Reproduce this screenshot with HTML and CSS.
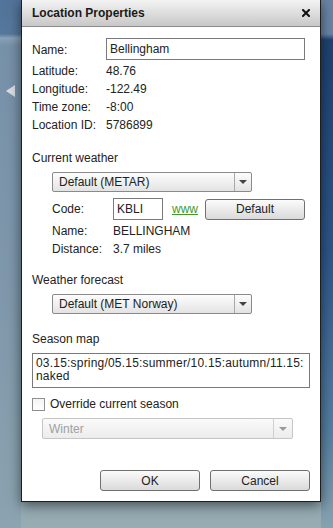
FILE: index.html
```html
<!DOCTYPE html>
<html lang="en">
<head>
    <meta charset="UTF-8">
    <title>Location Properties</title>
    <link rel="stylesheet" href="styles.css">
</head>
<body>
    <div class="desk">
        <div class="side-left"><span class="nav-arrow"></span></div>

        <div class="dialog">
            <div class="titlebar">
                <span class="title">Location Properties</span>
                <svg class="close" width="8" height="8" viewBox="0 0 8 8">
                    <path d="M1 1 L7 7 M7 1 L1 7" stroke="#111" stroke-width="2" stroke-linecap="square"/>
                </svg>
            </div>

            <div class="content">
                <div class="props">
                    <span>Name:</span><input class="field" type="text" value="Bellingham">
                    <span>Latitude:</span><span>48.76</span>
                    <span>Longitude:</span><span>-122.49</span>
                    <span>Time zone:</span><span>-8:00</span>
                    <span>Location ID:</span><span>5786899</span>
                </div>

                <div class="section-title">Current weather</div>
                <div class="indent">
                    <div class="select">
                        <span class="select-text">Default (METAR)</span>
                        <span class="select-btn"><i class="caret"></i></span>
                    </div>
                    <div class="code-row">
                        <span class="code-label">Code:</span>
                        <input class="field code-input" type="text" value="KBLI">
                        <a class="www" href="#">www</a>
                        <button class="btn">Default</button>
                    </div>
                    <div class="station">
                        <span>Name:</span><span>BELLINGHAM</span>
                        <span>Distance:</span><span>3.7 miles</span>
                    </div>
                </div>

                <div class="section-title forecast">Weather forecast</div>
                <div class="indent">
                    <div class="select">
                        <span class="select-text">Default (MET Norway)</span>
                        <span class="select-btn"><i class="caret"></i></span>
                    </div>
                </div>

                <div class="section-title season">Season map</div>
                <div class="textarea">03.15:spring/05.15:summer/10.15:autumn/11.15:<br>naked</div>

                <div class="check-row">
                    <span class="checkbox"></span>
                    <span>Override current season</span>
                </div>
                <div class="select select-wide disabled">
                    <span class="select-text">Winter</span>
                    <span class="select-btn"><i class="caret"></i></span>
                </div>
            </div>

            <div class="actions">
                <button class="btn">OK</button>
                <button class="btn">Cancel</button>
            </div>
        </div>

        <div class="side-right"></div>
    </div>
</body>
</html>
```

FILE: styles.css
```css
body {
    margin: 0;
    width: 333px;
    height: 528px;
    overflow: hidden;
    font-family: "Liberation Sans", Arial, sans-serif;
    font-size: 12px;
    color: #222;
    background: linear-gradient(#7f98ab, #8ea5b0 90%, #98acb3);
}

.desk {
    display: flex;
    height: 528px;
}

/* fondo */
.side-left {
    width: 21px;
    padding: 85px 0 0 6px;
    box-sizing: border-box;
    background: linear-gradient(#52739a 0, #57789c 34px, #8aa1b8 38px, #7791a9 46px, #7f98ab 300px, #8ca4b0 528px);
}

.nav-arrow {
    display: block;
    width: 0;
    height: 0;
    border-top: 6px solid transparent;
    border-bottom: 6px solid transparent;
    border-right: 9px solid #d9dee4;
}

.side-right {
    flex: 1;
    background: linear-gradient(#6985a6 0, #6985a6 34px, #1f4272 40px, #2c568a 250px, #547fa3 430px, #86a2b0 528px);
}

/* ventana */
.dialog {
    width: 300px;
    height: 502px;
    box-sizing: border-box;
    border: 1px solid #1e1e1e;
    border-top: none;
    background: #fff;
    box-shadow: 0 3px 12px rgba(0, 0, 0, 0.55);
    display: flex;
    flex-direction: column;
    position: relative;
    z-index: 1;
}

.titlebar {
    height: 26px;
    border-bottom: 1px solid #8c8c8c;
    background: linear-gradient(#f3f3f3, #c8c8c8);
    display: flex;
    align-items: center;
    justify-content: space-between;
    padding: 0 10px 0 10px;
}

.title {
    font-weight: bold;
    font-size: 12px;
    color: #1a1a1a;
}

.close {
    display: block;
}

.content {
    padding: 11px 15px 0 10px;
}

.props {
    display: grid;
    grid-template-columns: 74px 1fr;
    align-items: center;
    line-height: 18px;
}

.field {
    box-sizing: border-box;
    height: 22px;
    border: 1px solid #7a7a7a;
    padding: 0 3px;
    font-family: inherit;
    font-size: 12px;
    color: #222;
    outline: none;
}

.props .field {
    width: 100%;
    margin-bottom: 2px;
}

.section-title {
    margin-top: 15px;
    line-height: 18px;
}

.section-title.forecast {
    margin-top: 13px;
}

.section-title.season {
    margin-top: 16px;
}

.indent {
    padding-left: 20px;
}

.select {
    box-sizing: border-box;
    width: 200px;
    height: 20px;
    margin-top: 5px;
    border: 1px solid #8a8a8a;
    border-radius: 2px;
    background: linear-gradient(#fdfdfd, #e3e3e3);
    display: flex;
    align-items: center;
}

.select-text {
    flex: 1;
    padding-left: 6px;
}

.select-btn {
    width: 16px;
    height: 100%;
    border-left: 1px solid #a8a8a8;
    display: flex;
    align-items: center;
    justify-content: center;
}

.caret {
    width: 0;
    height: 0;
    border-left: 4px solid transparent;
    border-right: 4px solid transparent;
    border-top: 4px solid #444;
}

.code-row {
    display: flex;
    align-items: center;
    margin-top: 6px;
}

.code-label {
    width: 61px;
}

.code-input {
    width: 50px;
}

.www {
    margin-left: 9px;
    color: #3f9a2a;
    text-decoration: underline;
}

.btn {
    box-sizing: border-box;
    width: 100px;
    height: 21px;
    padding: 0;
    border: 1px solid #707070;
    border-radius: 3px;
    background: linear-gradient(#fbfbfb, #dadada);
    font-family: inherit;
    font-size: 12px;
    color: #222;
}

.code-row .btn {
    margin-left: auto;
}

.station {
    display: grid;
    grid-template-columns: 61px 1fr;
    line-height: 18px;
    margin-top: 2px;
}

.textarea {
    box-sizing: border-box;
    height: 35px;
    margin: 5px -5px 0 0;
    padding: 3px 3px 0;
    border: 1px solid #7a7a7a;
    line-height: 13px;
    letter-spacing: 0.2px;
}

.check-row {
    display: flex;
    align-items: center;
    gap: 5px;
    margin-top: 10px;
    line-height: 13px;
}

.checkbox {
    box-sizing: border-box;
    width: 13px;
    height: 13px;
    border: 1px solid #8e8f8f;
    background: linear-gradient(#f4f4f4, #fff);
}

.select-wide {
    width: 251px;
    height: 21px;
    margin: 7px 0 0 10px;
}

.select-wide .select-btn {
    width: 18px;
}

.disabled {
    border-color: #c5c5c5;
    color: #a0a0a0;
    background: linear-gradient(#fafafa, #ececec);
}

.disabled .select-btn {
    border-left-color: #d0d0d0;
}

.disabled .caret {
    border-top-color: #9a9a9a;
}

.actions {
    margin-top: auto;
    display: flex;
    justify-content: flex-end;
    gap: 10px;
    padding: 0 10px 10px 0;
}
```
